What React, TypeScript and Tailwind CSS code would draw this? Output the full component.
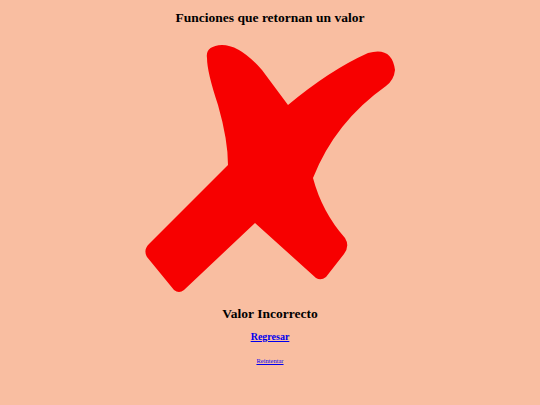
export default function App() {
  return (
    <div className="min-h-[405px] w-full bg-[#f9bea1] flex flex-col items-center font-['Liberation_Serif',serif] text-black">
      <h1 className="mt-[9px] text-[13.5px] font-bold leading-[17px]">Funciones que retornan un valor</h1>

      {/* big red cross */}
      <svg className="mt-[14px]" width="260" height="260" viewBox="140 40 260 260">
        <path
          fill="#f70000"
          d="M 207 58 Q 205 46 222 45 Q 240 45 262 70 L 288 105 Q 330 70 368 53 Q 392 46 395 70 Q 394 80 386 86 Q 335 122 313 178 Q 322 212 345 238 Q 350 246 344 254 L 326 277 Q 321 281 316 278 L 255 223 L 184 290 Q 179 294 174 290 L 147 257 Q 143 250 149 244 L 228 165 Q 228 140 218 105 Q 207 72 207 58 Z"
        />
      </svg>

      <h2 className="mt-[5px] text-[13.5px] font-bold leading-[17px]">Valor Incorrecto</h2>
      <a href="#" className="mt-[8px] text-[10px] font-bold leading-[13px] text-[#0000ee] underline">Regresar</a>
      <a href="#" className="mt-[13px] text-[6.5px] leading-[9px] text-[#0000ee] underline">Reintentar</a>
    </div>
  );
}
